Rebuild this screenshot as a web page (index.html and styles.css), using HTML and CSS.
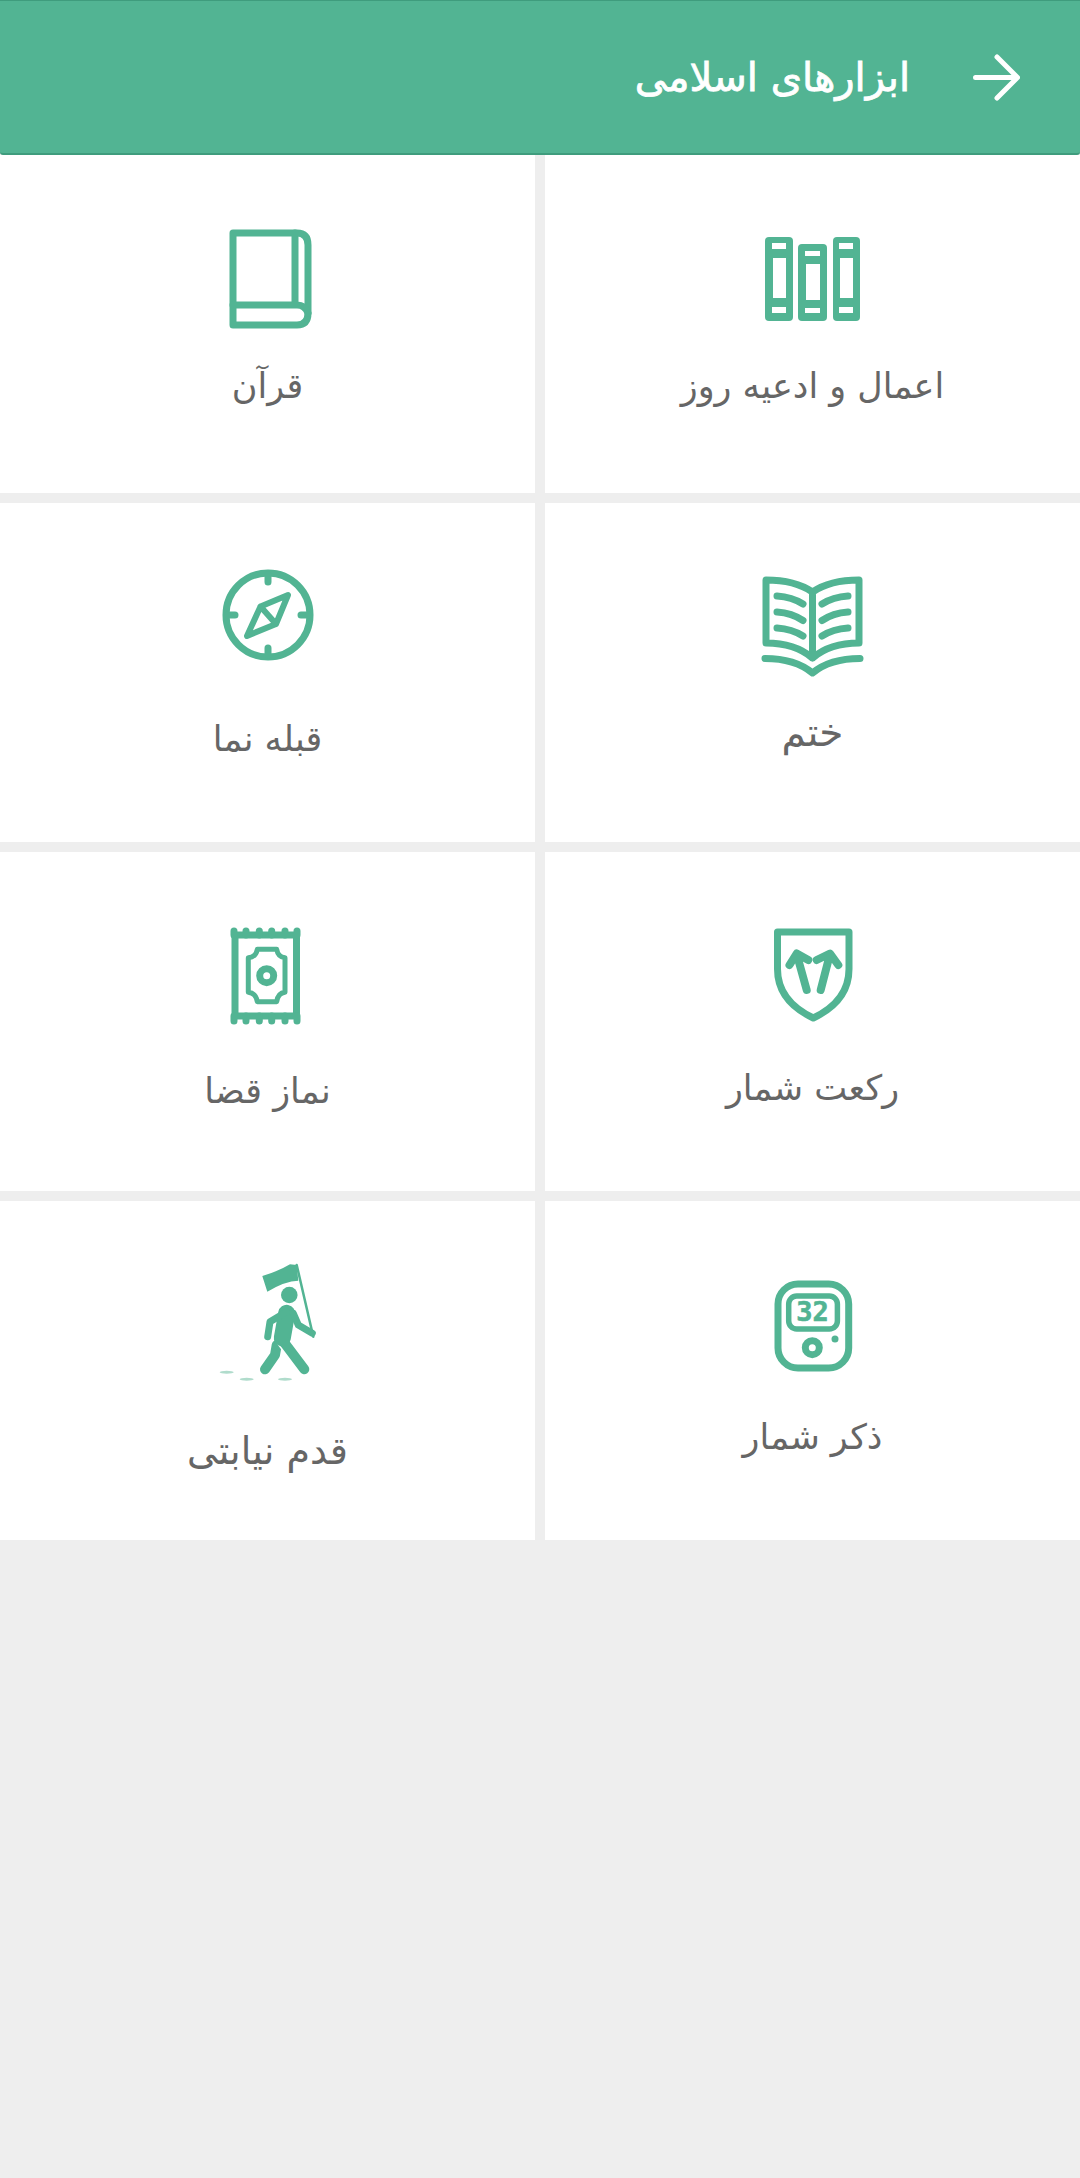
FILE: index.html
```html
<!DOCTYPE html>
<html lang="fa" dir="rtl">
<head>
  <meta charset="UTF-8">
  <title>ابزارهای اسلامی</title>
  <link rel="stylesheet" href="styles.css">
</head>
<body>
  <header class="top-bar">
    <svg class="back-arrow" viewBox="0 0 47 47">
      <path d="M2.500 23.500H44M24 3L44.500 23.500L24 44"/>
    </svg>
    <h1 class="top-title">ابزارهای اسلامی</h1>
  </header>

  <main class="tools">
    <!-- ستون راست اول چون صفحه راست به چپ است -->
    <a class="tool">
      <svg class="tool-icon" viewBox="-1 0 121 135">
        <g class="solid">
          <rect x="12" y="32" width="28" height="84" rx="4"/>
          <rect x="45" y="39" width="29" height="77" rx="4"/>
          <rect x="80" y="32" width="27" height="84" rx="4"/>
        </g>
        <g class="cut">
          <rect x="19" y="38" width="14" height="6"/>
          <rect x="20" y="53" width="13" height="40"/>
          <rect x="19" y="102" width="14" height="6"/>
          <rect x="52" y="46" width="15" height="5"/>
          <rect x="53" y="59" width="14" height="36"/>
          <rect x="52" y="103" width="15" height="5"/>
          <rect x="86" y="38" width="14" height="6"/>
          <rect x="87" y="53" width="13" height="40"/>
          <rect x="86" y="102" width="14" height="6"/>
        </g>
      </svg>
      <span class="tool-name name-a">اعمال و ادعیه روز</span>
    </a>
    <a class="tool">
      <svg class="tool-icon" viewBox="0 0 121 135">
        <g class="line">
          <path d="M26 28H90Q101 28 101 40V108Q101 120 90 120H26Z"/>
          <path d="M26 100H90Q98 100 101 108M88 28V100"/>
        </g>
      </svg>
      <span class="tool-name name-a">قرآن</span>
    </a>

    <a class="tool">
      <svg class="tool-icon" viewBox="0 0 121 135">
        <g class="line">
          <path d="M14 27Q43 27 60.500 39Q78 27 107 27V90Q78 90 60.500 105Q43 90 14 90ZM60.500 39V105"/>
          <path d="M13 105.500Q43 105.500 60.500 120Q78 105.500 108 105.500"/>
          <path d="M25 43Q40 44 51 51M25 59Q40 60 51 67.500M25 75Q40 76 51 83"/>
          <path d="M96 43Q81 44 70 51M96 59Q81 60 70 67.500M96 75Q81 76 70 83"/>
        </g>
      </svg>
      <span class="tool-name name-b">ختم</span>
    </a>
    <a class="tool">
      <svg class="tool-icon" viewBox="0 0 121 135">
        <g class="line">
          <circle cx="61" cy="62" r="42"/>
          <path d="M61 22V29M61 95V102M21 62H28M94 62H101"/>
          <path d="M81 42L69 71L40 83L53.500 53.500ZM53.500 53.500L69 71" stroke-width="6"/>
        </g>
      </svg>
      <span class="tool-name name-c">قبله نما</span>
    </a>

    <a class="tool">
      <svg class="tool-icon" viewBox="0 -1 121 135">
        <g class="line">
          <path d="M25.500 29H97V66Q97 98 61.300 115Q25.500 98 25.500 66Z"/>
          <path d="M44.700 51L54.700 87M37.500 62L44.700 50.500L56.300 57" stroke-width="8"/>
          <path d="M78 51L68.700 87M64.700 57L78 50.500L86.300 62" stroke-width="8"/>
        </g>
      </svg>
      <span class="tool-name name-c">رکعت شمار</span>
    </a>
    <a class="tool">
      <svg class="tool-icon" viewBox="0 -1 121 135">
        <g class="line">
          <rect x="28" y="32" width="61.500" height="81"/>
          <path d="M27 28V32M39 28V32M52.300 28V32M64.700 28V32M78 28V32M90 28V32"/>
          <path d="M27 113V118M39 113V118M52.300 113V118M64.700 113V118M78 113V118M90 113V118"/>
          <path d="M50.300 46.300H69.700Q71 54 78 54.700V89.300Q71 90 69.700 98.700H50.300Q49 90 41.300 89.300V54.700Q49 54 50.300 46.300Z" stroke-width="5"/>
          <circle cx="59.700" cy="72.700" r="7"/>
        </g>
      </svg>
      <span class="tool-name name-d">نماز قضا</span>
    </a>

    <a class="tool">
      <svg class="tool-icon" viewBox="0 0 121 135">
        <g class="line">
          <rect x="26" y="33" width="70.700" height="84" rx="20"/>
          <rect x="36.700" y="45" width="48.700" height="33" rx="8" stroke-width="5.500"/>
          <circle cx="60.300" cy="96.700" r="7"/>
        </g>
        <circle class="solid" cx="83" cy="88" r="3.500"/>
        <text class="counter-digits" x="60.500" y="70" direction="ltr" text-anchor="middle">32</text>
      </svg>
      <span class="tool-name name-c">ذکر شمار</span>
    </a>
    <a class="tool">
      <svg class="tool-icon" viewBox="0 0 121 135">
        <path class="solid" d="M55.300 25Q72 20 83 13.300L89.700 14L91.300 29.700Q78 30 60.300 40.700Z"/>
        <g class="line">
          <path d="M89.700 14L106.300 85.700" stroke-width="2.500"/>
          <path d="M69.700 94L68 104L58 118.300" stroke-width="10"/>
        </g>
        <path class="halo" d="M75.300 89L97.300 118.300"/>
        <g class="line">
          <path d="M75.300 89L97.300 118.300" stroke-width="10"/>
          <path d="M79.700 62.300L75.300 87" stroke-width="17"/>
          <path d="M79.700 60.700L63 70.700L60.700 85.700M86.300 62.300L91.300 74L105.300 82.300"/>
        </g>
        <circle class="solid" cx="82.300" cy="44" r="8.300"/>
        <g class="steps">
          <ellipse cx="19.700" cy="121.300" rx="7" ry="1.500"/>
          <ellipse cx="39.700" cy="128.300" rx="7" ry="1.500"/>
          <ellipse cx="78" cy="128.300" rx="7" ry="1.500"/>
        </g>
      </svg>
      <span class="tool-name name-e">قدم نیابتی</span>
    </a>
  </main>
</body>
</html>
```

FILE: styles.css
```css
body {
  margin: 0;
  padding: 0;
  min-height: 2178px;
  background: #eeeeee;
  font-family: 'DejaVu Sans', sans-serif;
  overflow: hidden;
}

.top-bar {
  display: flex;
  align-items: center;
  height: 152px;
  padding: 0 60px 0 0;
  background: #52b493;
  border-top: 1px solid #3f9c7d;
  border-bottom: 2px solid #3f9c7d;
  border-radius: 0 0 3px 3px;
}

.back-arrow {
  width: 47px;
  height: 47px;
  margin-left: 63px;
  fill: none;
  stroke: #fff;
  stroke-width: 5;
  stroke-linecap: round;
  stroke-linejoin: round;
}

.top-title {
  margin: 0;
  font-size: 40px;
  font-weight: normal;
  color: #fff;
  -webkit-text-stroke: 0.8px #fff;
}

.tools {
  display: grid;
  grid-template-columns: 535px 535px;
  grid-template-rows: 338px 339px 339px 339px;
  gap: 10px;
}

.tool {
  display: flex;
  flex-direction: column;
  align-items: center;
  padding-top: 50px;
  background: #fff;
  box-sizing: border-box;
}

.tool-icon {
  display: block;
  width: 121px;
  height: 135px;
  flex: none;
}

.tool-name {
  font-size: 35px;
  line-height: 50px;
  color: #666;
  white-space: nowrap;
}

/* فاصله متن تا آیکون در هر کارت فرق دارد */
.name-a { margin-top: 21px; }
.name-b { margin-top: 20px; font-size: 39px; }
.name-c { margin-top: 26px; }
.name-d { margin-top: 29px; }
.name-e { margin-top: 40px; font-size: 38px; }

.solid { fill: #52b493; }
.cut { fill: #fff; }
.steps { fill: #b0dccc; }

.line {
  fill: none;
  stroke: #52b493;
  stroke-width: 7;
  stroke-linecap: round;
  stroke-linejoin: round;
}

.halo {
  fill: none;
  stroke: #fff;
  stroke-width: 13;
}

.counter-digits {
  font-family: 'DejaVu Sans Mono', monospace;
  font-size: 27px;
  font-weight: bold;
  fill: #52b493;
  stroke: #52b493;
  stroke-width: 0.6;
}
```
